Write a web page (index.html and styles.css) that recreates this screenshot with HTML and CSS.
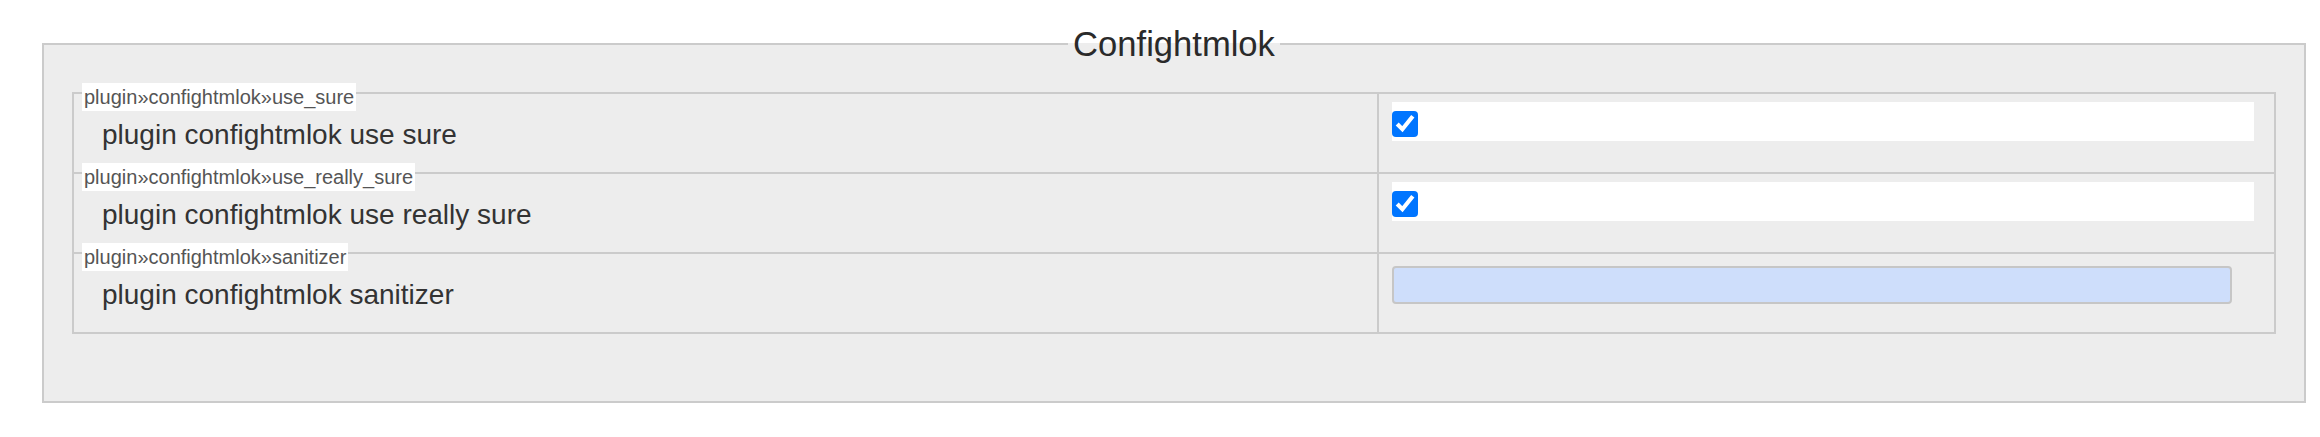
FILE: index.html
```html
<!DOCTYPE html>
<html lang="en">
<head>
    <meta charset="UTF-8">
    <meta name="viewport" content="width=device-width, initial-scale=1.0">
    <title>Confightmlok</title>
    <link rel="stylesheet" href="styles.css">
</head>
<body>

<fieldset class="panel">
    <legend class="panelTitle">Confightmlok</legend>
    <div class="settings">
        <div class="setting">
            <div class="settingName">
                <span class="settingKey">plugin»confightmlok»use_sure</span>
                <label class="settingLabel" for="use_sure">plugin confightmlok use sure</label>
            </div>
            <div class="settingValue">
                <div class="checkWrap"><input type="checkbox" id="use_sure" checked></div>
            </div>
        </div>
        <div class="setting">
            <div class="settingName">
                <span class="settingKey">plugin»confightmlok»use_really_sure</span>
                <label class="settingLabel" for="use_really_sure">plugin confightmlok use really sure</label>
            </div>
            <div class="settingValue">
                <div class="checkWrap"><input type="checkbox" id="use_really_sure" checked></div>
            </div>
        </div>
        <div class="setting">
            <div class="settingName">
                <span class="settingKey">plugin»confightmlok»sanitizer</span>
                <label class="settingLabel" for="sanitizer">plugin confightmlok sanitizer</label>
            </div>
            <div class="settingValue">
                <input type="text" class="textField" id="sanitizer">
            </div>
        </div>
    </div>
</fieldset>

</body>
</html>
```

FILE: styles.css
```css
body {
    font-family: 'Liberation Sans', Arial, sans-serif;
    margin: 0;
    padding: 0;
    background-color: #fff;
    color: #333;
}
.panel {
    margin: 24px 14px 0 42px;
    padding: 28px 28px 67px;
    border: 2px solid #cbcbcb;
    background-color: #ededed;
    min-width: 0;
}
.panelTitle {
    margin: 0 auto;
    padding: 0 5px;
    font-size: 34.6px;
    line-height: 40px;
    color: #2a2a2a;
}
.settings {
    border: 2px solid #cbcbcb;
}
.setting {
    display: grid;
    grid-template-columns: 1303px 1fr;
}
.setting + .setting {
    border-top: 2px solid #cbcbcb;
}
/* key tag sits over the row's top border */
.settingName {
    padding: 0 0 21px 8px;
}
.settingKey {
    display: block;
    width: fit-content;
    margin-top: -11px;
    padding: 0 2px;
    background-color: #fff;
    font-size: 20px;
    line-height: 28px;
    color: #555;
}
.settingLabel {
    display: block;
    margin: 8px 0 0 20px;
    font-size: 28px;
    line-height: 32px;
}
.settingValue {
    border-left: 2px solid #cbcbcb;
    padding: 8px 20px 0 13px;
}
.checkWrap {
    box-sizing: border-box;
    height: 39px;
    padding-top: 9px;
    background-color: #fff;
}
.checkWrap input {
    display: block;
    zoom: 2;
    margin: 0;
}
.textField {
    display: block;
    box-sizing: border-box;
    width: 840px;
    height: 38px;
    margin-top: 4px;
    padding: 0 6px;
    border: 2px solid #c6c6c6;
    border-radius: 4px;
    background-color: #cedefb;
}
```
